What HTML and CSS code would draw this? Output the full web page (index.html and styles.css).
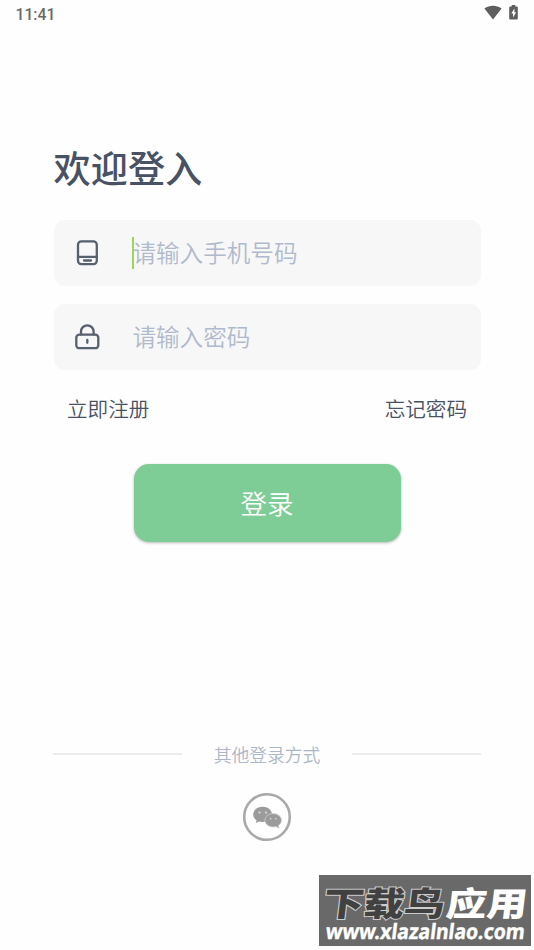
FILE: index.html
```html
<!DOCTYPE html>
<html lang="zh-CN">
<head>
<meta charset="utf-8">
<title>欢迎登入</title>
<link rel="stylesheet" href="styles.css">
</head>
<body>
<div class="screen">
  <header class="status">
    <span class="clock">11:41</span>
    <span class="status-icons">
      <svg class="wifi" width="18" height="15" viewBox="0 0 18 15"><path d="M.4 3.400C5.500-.2 12.500-.2 17.600 3.400L9 14.400z"/></svg>
      <svg class="battery" width="9" height="15" viewBox="0 0 9 15"><path d="M2.700 0h3.600v1.400h1.500q1 0 1 1v11.200q0 1-1 1H1.200q-1 0-1-1V2.400q0-1 1-1h1.500z"/><path class="bolt" d="M5.400 3.400 2.300 8.500h1.800v4l3-5.200H5.400z"/></svg>
    </span>
  </header>
  <main class="login">
    <h1 class="title">欢迎登入</h1>
    <div class="field">
      <svg class="icon" width="30" height="30" viewBox="0 0 30 30"><rect x="6" y="3.300" width="18.800" height="22.800" rx="3.400"/><path d="M6 18.800h18.800M12 22.500h7"/></svg>
      <span class="caret"></span>
      <span class="placeholder">请输入手机号码</span>
    </div>
    <div class="field">
      <svg class="icon" width="30" height="30" viewBox="0 0 30 30"><rect x="4.300" y="12.600" width="22" height="13.600" rx="3"/><path d="M9 12.600v-3a6.300 6.300 0 0 1 12.600 0v3M15.300 17.800v3"/></svg>
      <span class="caret hidden"></span>
      <span class="placeholder">请输入密码</span>
    </div>
    <nav class="links"><a>立即注册</a><a>忘记密码</a></nav>
    <button class="submit">登录</button>
  </main>
  <footer class="other">
    <div class="divider"><span class="line"></span><span>其他登录方式</span><span class="line"></span></div>
    <svg class="wechat" width="50" height="50" viewBox="0 0 50 50">
      <circle class="ring" cx="25" cy="25" r="22.800"/>
      <path class="bubble" d="M20.600 14.800c-5.400 0-9.400 3.400-9.400 7.600 0 2.500 1.300 4.500 3.400 5.800l-.8 2.900 3.300-1.700c1.100.3 2.300.5 3.500.5 5.200 0 9.400-3.400 9.400-7.500s-4-7.600-9.400-7.600z"/>
      <path class="bubble front" d="M31.200 21.600c-4.600 0-8.300 3-8.300 6.700s3.700 6.700 8.300 6.700c1 0 2-.1 2.900-.4l3 1.600-.7-2.600c1.900-1.200 3.100-3.100 3.100-5.300 0-3.700-3.700-6.700-8.300-6.700z"/>
      <g class="eyes"><circle cx="17.500" cy="20.500" r="1.200"/><circle cx="24" cy="20.500" r="1.200"/><circle cx="28.600" cy="26.800" r="1"/><circle cx="33.800" cy="26.800" r="1"/></g>
    </svg>
  </footer>
  <aside class="mark">
    <svg width="212" height="71" viewBox="0 0 212 71">
      <g transform="translate(3 40.500) skewX(-7)"><text class="mark-name dark" transform="scale(1.210 1)">下载鸟</text><text class="mark-name light" transform="translate(123 0) scale(1.210 1)">应用</text></g>
      <g transform="translate(6 64) skewX(-7)"><text class="mark-url" textLength="199" lengthAdjust="spacingAndGlyphs">www.xlazalnlao.com</text></g>
    </svg>
  </aside>
</div>
</body>
</html>
```
FILE: styles.css
```css
* { box-sizing: border-box; }
body {
  margin: 0;
  background: #fefefe;
  color: #485264;
  font-family: "Noto Sans CJK SC", sans-serif;
}
.screen {
  position: relative;
  height: 950px;
  overflow: hidden;
  display: flex;
  flex-direction: column;
}
.status {
  height: 28px;
  padding: 0 16px 0 15.500px;
  display: flex;
  justify-content: space-between;
  align-items: center;
}
.clock {
  padding-top: 1px;
  font: 500 15.700px/28px Roboto, sans-serif;
  color: #6a6a6a;
}
.status-icons { display: flex; gap: 7px; margin-top: -3px; }
.wifi, .battery { fill: #5e5e5e; }
.battery .bolt { fill: #fff; }
.login {
  padding: 111px 53.500px 0;
  display: flex;
  flex-direction: column;
}
.title {
  margin: 0 0 25px;
  font-size: 37.200px;
  line-height: 56px;
  font-weight: 500;
}
.field {
  height: 66px;
  margin-bottom: 18px;
  padding-left: 18.500px;
  border-radius: 11px;
  background: #f7f7f7;
  display: flex;
  align-items: center;
}
.icon {
  fill: none;
  stroke: #56606f;
  stroke-width: 2.300;
  stroke-linecap: round;
}
.caret {
  width: 2px;
  height: 32px;
  margin-left: 29.800px;
  background: #9bd65a;
}
.caret.hidden { visibility: hidden; }
.placeholder {
  margin-left: -1.400px;
  padding-bottom: 2px;
  font-size: 23.600px;
  line-height: 34px;
  font-weight: 350;
  color: #b0bacd;
}
.links {
  margin-top: 3.500px;
  padding: 0 13.500px;
  display: flex;
  justify-content: space-between;
  font-size: 20.600px;
  line-height: 32px;
  font-weight: 350;
}
.submit {
  width: 267px;
  height: 78px;
  margin: 40px auto 0;
  padding: 0;
  border: 0;
  border-radius: 15px;
  background: #7ecc96;
  box-shadow: 0 1px 3px rgba(0, 0, 0, .28);
  color: #fff;
  font: 350 26.500px/76px "Noto Sans CJK SC", sans-serif;
}
.other {
  margin-top: 197px;
  padding: 0 53px;
  display: flex;
  flex-direction: column;
  align-items: center;
}
.divider {
  width: 100%;
  display: flex;
  justify-content: space-between;
  align-items: center;
  font-size: 17.800px;
  line-height: 30px;
  font-weight: 350;
  color: #acb7c9;
}
.line { width: 129px; height: 2px; background: #ebebeb; }
.wechat { margin-top: 23px; filter: blur(.6px); }
.ring { fill: #fff; stroke: #a9a9a9; stroke-width: 2.600; }
.bubble { fill: #9b9b9b; }
.front { stroke: #d0d0d0; stroke-width: .8; }
.eyes { fill: #ccc; }
.mark {
  position: absolute;
  left: 319px;
  top: 875px;
  width: 212px;
  height: 71px;
  background: #696969;
}
.mark svg { display: block; overflow: visible; }
.mark-name {
  font-family: "Noto Sans CJK SC", sans-serif;
  font-size: 33.500px;
  font-weight: 900;
}
.dark { fill: #414141; stroke: #ccc; stroke-width: 2; paint-order: stroke; }
.light { fill: #fff; }
.mark-url {
  font: 700 21px "Noto Sans", sans-serif;
  fill: #fff;
  stroke: #fff;
  stroke-width: .4;
}
```
